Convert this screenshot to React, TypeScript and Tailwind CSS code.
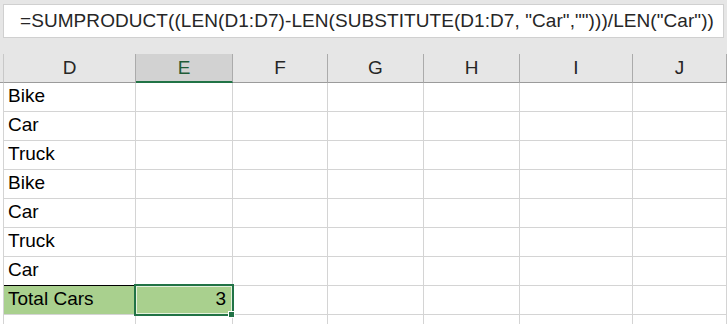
import React from "react";

const cols = [
  { l: "D", w: "w-[132px]" },
  { l: "E", w: "w-[97px]" },
  { l: "F", w: "w-[95px]" },
  { l: "G", w: "w-[96px]" },
  { l: "H", w: "w-[96px]" },
  { l: "I", w: "w-[113px]" },
  { l: "J", w: "flex-1" },
];

const data = ["Bike", "Car", "Truck", "Bike", "Car", "Truck", "Car"];

const font = { fontFamily: '"Liberation Sans", Arial, sans-serif' };

export default function App() {
  return (
    <div
      className="w-[727px] h-[324px] bg-[#e6e6e6] overflow-hidden relative flex flex-col"
      style={font}
    >
      <div className="h-[4px] shrink-0" />
      <div className="shrink-0 mx-[3px] h-[34px] bg-white border border-[#d0d0d0] flex items-center pl-[16px] text-[19px] tracking-[0.07px] text-[#262626] whitespace-nowrap overflow-hidden">
        =SUMPRODUCT((LEN(D1:D7)-LEN(SUBSTITUTE(D1:D7, "Car","")))/LEN("Car"))
      </div>
      <div className="h-[16px] shrink-0" />
      {/* header */}
      <div className="flex h-[29px] shrink-0">
        <div className="w-[4px] border-r border-[#c8c8c8] border-b border-b-[#9b9b9b]" />
        {cols.map((c) => (
          <div
            key={c.l}
            className={`${c.w} flex items-center justify-center text-[19px] pt-[1px] ${
              c.l === "E"
                ? "bg-[#d2d2d2] text-[#1f5c38] border-b-2 border-[#217346] border-r border-r-[#ababab]"
                : "bg-[#e6e6e6] text-[#262626] border-b border-b-[#9b9b9b] border-r border-r-[#ababab]"
            }`}
          >
            {c.l}
          </div>
        ))}
      </div>
      {/* data rows */}
      {[...data, "Total Cars", ""].map((v, i) => {
        const total = i === 7;
        return (
          <div key={i} className="flex h-[29px] shrink-0 bg-white">
            <div className="w-[4px] bg-white border-r border-[#d4d4d4]" />
            {cols.map((c, j) => {
              let cls = `${c.w} border-r border-b border-[#d4d4d4] text-[19px] text-black flex items-end pb-[6px] leading-none`;
              if (total && j === 0) cls += " bg-[#a9d08e] pl-[4px]";
              else if (total && j === 1) cls += " bg-[#a9d08e] justify-end pr-[6px]";
              else if (i === 6 && j === 0) cls += " pl-[4px] border-b-black";
              else cls += " pl-[4px]";
              return (
                <div key={c.l} className={cls}>
                  {j === 0 ? v : total && j === 1 ? "3" : ""}
                </div>
              );
            })}
          </div>
        );
      })}
      {/* selection */}
      <div className="absolute left-[134px] top-[284px] w-[100px] h-[32px] border-2 border-[#217346] pointer-events-none">
        <div className="w-full h-full border border-white/70" />
      </div>
      <div className="absolute left-[228px] top-[311px] w-[7px] h-[7px] bg-[#217346] border border-white" />
    </div>
  );
}
